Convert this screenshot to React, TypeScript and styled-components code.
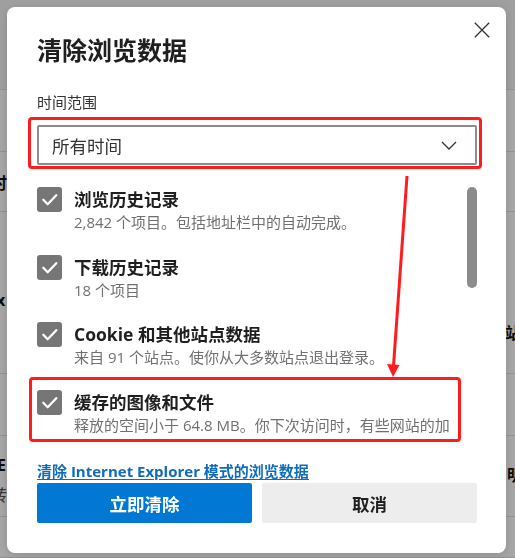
import React from "react";
import styled, { createGlobalStyle } from "styled-components";

const FONT = `"Segoe UI", "Open Sans", "Noto Sans CJK SC", sans-serif`;

const GlobalStyle = createGlobalStyle`
  html, body {
    margin: 0;
    padding: 0;
    width: 515px;
    height: 558px;
    overflow: hidden;
    background: #ffffff;
    font-family: ${FONT};
  }
  * { box-sizing: border-box; }
`;

/* ---------- underlying page (seen through the overlay) ---------- */
const Page = styled.div`
  width: 515px;
  height: 558px;
  overflow: hidden;
  display: flex;
  flex-direction: column;
`;

const BgRow = styled.div<{ $h: number; $bg?: string }>`
  height: ${(p) => p.$h}px;
  flex-shrink: 0;
  background: ${(p) => p.$bg ?? "#ffffff"};
  border-bottom: 1px solid #e2e2e2;
  display: flex;
  justify-content: space-between;
  align-items: flex-start;
`;

const BgCol = styled.div<{ $pt: number; $gap?: number }>`
  padding-top: ${(p) => p.$pt}px;
  display: flex;
  flex-direction: column;
  gap: ${(p) => p.$gap ?? 0}px;
`;

const BgText = styled.span<{ $left?: number; $right?: number; $muted?: boolean }>`
  display: block;
  font-size: 16px;
  line-height: 18px;
  font-weight: ${(p) => (p.$muted ? 400 : 700)};
  color: ${(p) => (p.$muted ? "#555" : "#111")};
  margin-left: ${(p) => p.$left ?? 0}px;
  margin-right: ${(p) => p.$right ?? 0}px;
  white-space: nowrap;
`;

/* ---------- overlay + dialog ---------- */
const Backdrop = styled.div`
  position: fixed;
  inset: 0;
  background: rgba(0, 0, 0, 0.35);
  display: flex;
  align-items: flex-start;
  padding: 7px 0 0 7px;
`;

const Dialog = styled.div`
  width: 499px;
  background: #ffffff;
  border-radius: 8px;
  padding: 8px 29px 30px 30px;
  display: flex;
  flex-direction: column;
  box-shadow: 0 2px 10px rgba(0, 0, 0, 0.15);
`;

const Header = styled.div`
  display: flex;
  justify-content: space-between;
  align-items: flex-start;
  height: 52px;
`;

const Title = styled.h1`
  margin: 19px 0 0 0;
  font-size: 25px;
  line-height: 33px;
  font-weight: 700;
  color: #1f1f1f;
  font-family: ${FONT};
`;

const CloseButton = styled.button`
  width: 30px;
  height: 30px;
  margin-right: -20px;
  border: none;
  background: transparent;
  padding: 0;
  display: flex;
  align-items: center;
  justify-content: center;
  color: #333;
`;

const Label = styled.div`
  margin-top: 25px;
  font-size: 15px;
  line-height: 20px;
  color: #333;
`;

const Select = styled.div`
  margin-top: 13px;
  height: 40px;
  border: 2px solid #8c8c8c;
  border-radius: 2px;
  display: flex;
  align-items: center;
  justify-content: space-between;
  padding: 0 18px 0 13px;
  font-size: 17.5px;
  color: #333;
`;

const ListArea = styled.div`
  margin-top: 10px;
  height: 261px;
  display: flex;
  gap: 10px;
`;

const List = styled.div`
  width: 420px;
  overflow: hidden;
  padding-top: 12px;
  display: flex;
  flex-direction: column;
`;

const Track = styled.div`
  width: 10px;
  padding-top: 12px;
`;

const Thumb = styled.div`
  width: 10px;
  height: 101px;
  border-radius: 5px;
  background: #8b8b8b;
`;

const Item = styled.div`
  display: flex;
  gap: 12px;
  margin-bottom: 22.5px;
  flex-shrink: 0;
`;

const Box = styled.div`
  width: 25px;
  height: 25px;
  flex-shrink: 0;
  background: #767676;
  border-radius: 3px;
  display: flex;
  align-items: center;
  justify-content: center;
`;

const ItemText = styled.div`
  display: flex;
  flex-direction: column;
  min-width: 0;
`;

const ItemTitle = styled.div`
  font-size: 17.5px;
  line-height: 25px;
  font-weight: 700;
  color: #1f1f1f;
`;

const ItemSub = styled.div`
  font-size: 15px;
  line-height: 20px;
  color: #707070;
`;

const Link = styled.a`
  margin-top: 25px;
  font-size: 15px;
  line-height: 20px;
  font-weight: 700;
  color: #0f6cbd;
  text-decoration: underline;
  text-underline-offset: 2px;
  align-self: flex-start;
`;

const ButtonRow = styled.div`
  margin-top: 2px;
  display: grid;
  grid-template-columns: 1fr 1fr;
  gap: 10px;
`;

const Button = styled.button<{ $primary?: boolean }>`
  height: 40px;
  border: none;
  border-radius: 2px;
  font-family: ${FONT};
  font-size: 17.5px;
  font-weight: 700;
  background: ${(p) => (p.$primary ? "#0078d4" : "#ededed")};
  color: ${(p) => (p.$primary ? "#ffffff" : "#1f1f1f")};
`;

/* ---------- red annotation marks ---------- */
const AnnotBox = styled.div<{ $x: number; $y: number; $w: number; $h: number }>`
  position: absolute;
  left: ${(p) => p.$x}px;
  top: ${(p) => p.$y}px;
  width: ${(p) => p.$w}px;
  height: ${(p) => p.$h}px;
  border: 3.5px solid #ff1c1c;
  border-radius: 4px;
  pointer-events: none;
`;

const ArrowSvg = styled.svg`
  position: absolute;
  left: 0;
  top: 0;
  pointer-events: none;
`;

const Check = () => (
  <svg width="25" height="25" viewBox="0 0 25 25">
    <polyline
      points="6.3,12.8 10.7,17.2 19.3,8.2"
      fill="none"
      stroke="#ffffff"
      strokeWidth="2.3"
      strokeLinecap="round"
      strokeLinejoin="round"
    />
  </svg>
);

const items = [
  { title: "浏览历史记录", sub: "2,842 个项目。包括地址栏中的自动完成。" },
  { title: "下载历史记录", sub: "18 个项目" },
  { title: "Cookie 和其他站点数据", sub: "来自 91 个站点。使你从大多数站点退出登录。" },
  { title: "缓存的图像和文件", sub: "释放的空间小于 64.8 MB。你下次访问时，有些网站的加载速度可能会变慢。" },
];

export default function App() {
  return (
    <>
      <GlobalStyle />
      <Page>
        <BgRow $h={90} $bg="#f5f5f5" />
        <BgRow $h={62} />
        <BgRow $h={60}>
          <BgCol $pt={22}>
            <BgText $left={-9}>时</BgText>
          </BgCol>
        </BgRow>
        <BgRow $h={162}>
          <BgCol $pt={79}>
            <BgText $left={-4}>x</BgText>
          </BgCol>
          <BgCol $pt={112}>
            <BgText $right={-6}>站</BgText>
          </BgCol>
        </BgRow>
        <BgRow $h={62} />
        <BgRow $h={81}>
          <BgCol $pt={20} $gap={12}>
            <BgText $left={-3}>E</BgText>
            <BgText $left={-9} $muted>
              转
            </BgText>
          </BgCol>
          <BgCol $pt={30}>
            <BgText $right={-8}>明</BgText>
          </BgCol>
        </BgRow>
        <BgRow $h={41} />
      </Page>

      <Backdrop>
        <Dialog>
          <Header>
            <Title>清除浏览数据</Title>
            <CloseButton aria-label="关闭">
              <svg width="16" height="16" viewBox="0 0 16 16">
                <path d="M0.8 0.8 L15.2 15.2 M15.2 0.8 L0.8 15.2" stroke="#333" strokeWidth="1.3" fill="none" />
              </svg>
            </CloseButton>
          </Header>
          <Label>时间范围</Label>
          <Select>
            <span>所有时间</span>
            <svg width="16" height="9" viewBox="0 0 16 9">
              <polyline points="1,1 8,8 15,1" fill="none" stroke="#333" strokeWidth="1.3" />
            </svg>
          </Select>
          <ListArea>
            <List>
              {items.map((it) => (
                <Item key={it.title}>
                  <Box>
                    <Check />
                  </Box>
                  <ItemText>
                    <ItemTitle>{it.title}</ItemTitle>
                    <ItemSub>{it.sub}</ItemSub>
                  </ItemText>
                </Item>
              ))}
            </List>
            <Track>
              <Thumb />
            </Track>
          </ListArea>
          <Link href="#">清除 Internet Explorer 模式的浏览数据</Link>
          <ButtonRow>
            <Button $primary>立即清除</Button>
            <Button>取消</Button>
          </ButtonRow>
        </Dialog>

        <AnnotBox $x={28} $y={117} $w={454} $h={52} />
        <AnnotBox $x={29} $y={377} $w={432} $h={65} />
        <ArrowSvg width="515" height="558" viewBox="0 0 515 558">
          <line x1="407" y1="176" x2="393.5" y2="366" stroke="#ff1c1c" strokeWidth="3" />
          <polygon points="387,364 399.5,365 393,377" fill="#ff1c1c" />
        </ArrowSvg>
      </Backdrop>
    </>
  );
}
